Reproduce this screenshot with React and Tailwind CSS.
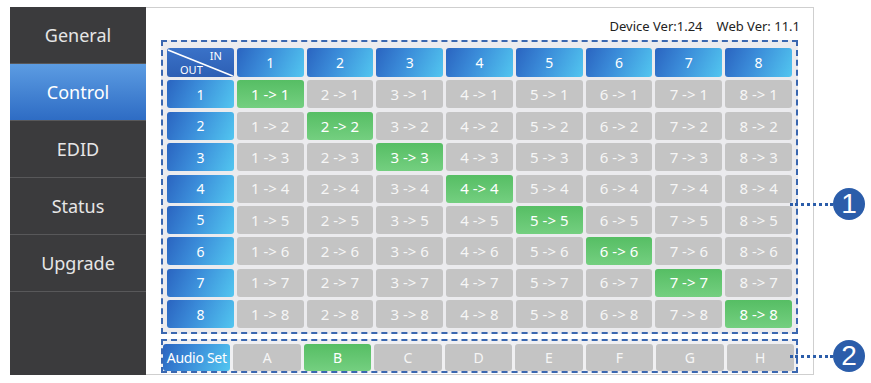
import React from 'react';

const font = { fontFamily: 'Tahoma, "Noto Sans", "Open Sans", sans-serif' };

const menu = ['General', 'Control', 'EDID', 'Status', 'Upgrade'];
const nums = [1, 2, 3, 4, 5, 6, 7, 8];
const audio = ['A', 'B', 'C', 'D', 'E', 'F', 'G', 'H'];

const blueCell =
  'bg-[linear-gradient(115deg,#2a64c0_0%,#3a8ad8_40%,#52c6f0_100%)] text-white';
const greyCell = 'bg-[#c4c4c4] text-[#f6f6f6]';
const greenCell = 'bg-[linear-gradient(180deg,#56be64,#74cf80)] text-white';

function Callout({ n, top, lineFrom }) {
  return (
    <div className="absolute flex items-center" style={{ top, left: lineFrom }}>
      <div className="w-[43px] border-t-[3px] border-dotted border-[#2b5daa]" />
      <div
        className="w-[32px] h-[32px] rounded-full bg-[#2b5daa] flex items-center justify-center text-white text-[28px] leading-none"
        style={{ fontFamily: '"Liberation Sans", Arial, sans-serif' }}
      >
        {n}
      </div>
    </div>
  );
}

export default function App() {
  return (
    <div className="relative w-[871px] h-[383px] bg-white overflow-hidden" style={font}>
      <div className="flex pt-[7px] pl-[10px]">
        {/* sidebar */}
        <div className="w-[136px] h-[368px] bg-[#3b3b3d] flex flex-col">
          {menu.map((m) => (
            <div
              key={m}
              className={`h-[57px] flex items-center justify-center text-[18px] border-b border-[#58585a] ${
                m === 'Control'
                  ? 'bg-[linear-gradient(180deg,#5c9ce2,#2e6cc4)] text-white'
                  : 'text-[#e6e6e6]'
              }`}
            >
              {m}
            </div>
          ))}
        </div>

        {/* main panel */}
        <div className="w-[668px] h-[368px] border-t border-r border-b border-[#cfcfcf] flex flex-col px-[15px]">
          <div className="h-[32px] flex items-center justify-end gap-[14px] text-[13px] text-[#222] pt-[6px]">
            <span>Device Ver:1.24</span>
            <span className="mr-[-2px]">Web Ver: 11.1</span>
          </div>

          {/* matrix */}
          <div className="border-2 border-dashed border-[#3a67b0] bg-[#ebebee] pt-[6px] pb-[4px] px-[4px]">
            <div className="grid grid-cols-9 gap-x-[3px] gap-y-[3.4px]">
              <div className="relative h-[29px] rounded-[3px] bg-[linear-gradient(180deg,#3a72c8,#2d5fb4)] text-white text-[11px] leading-none">
                <svg className="absolute inset-0" width="100%" height="100%" viewBox="0 0 66 29" preserveAspectRatio="none">
                  <line x1="1" y1="2" x2="65" y2="28" stroke="white" strokeWidth="1.6" />
                </svg>
                <span className="absolute right-[12px] top-[2px]">IN</span>
                <span className="absolute left-[13px] bottom-[2px]">OUT</span>
              </div>
              {nums.map((i) => (
                <div key={'h' + i} className={`h-[29px] rounded-[3px] flex items-center justify-center text-[14px] ${blueCell}`}>
                  {i}
                </div>
              ))}
              {nums.map((o) => (
                <React.Fragment key={'r' + o}>
                  <div className={`h-[28px] rounded-[3px] flex items-center justify-center text-[14px] ${blueCell}`}>
                    {o}
                  </div>
                  {nums.map((i) => (
                    <div
                      key={i + '-' + o}
                      className={`h-[28px] rounded-[3px] flex items-center justify-center text-[15px] ${
                        i === o ? greenCell : greyCell
                      }`}
                    >
                      {i} -&gt; {o}
                    </div>
                  ))}
                </React.Fragment>
              ))}
            </div>
          </div>

          {/* audio */}
          <div className="mt-[5px] border-2 border-dashed border-[#3a67b0] bg-[#f0f0f2] pt-[3px] pr-[2px]">
            <div className="grid grid-cols-9 gap-x-[3px]">
              <div className={`h-[27px] rounded-[3px] flex items-center justify-center text-[14px] whitespace-nowrap tracking-[-0.3px] ${blueCell}`}>
                Audio Set
              </div>
              {audio.map((a) => (
                <div
                  key={a}
                  className={`h-[27px] rounded-[3px] flex items-center justify-center text-[14px] ${
                    a === 'B' ? greenCell : greyCell
                  }`}
                >
                  {a}
                </div>
              ))}
            </div>
          </div>
        </div>
      </div>

      <Callout n="1" top={188} lineFrom={790} />
      <Callout n="2" top={340} lineFrom={790} />
    </div>
  );
}
